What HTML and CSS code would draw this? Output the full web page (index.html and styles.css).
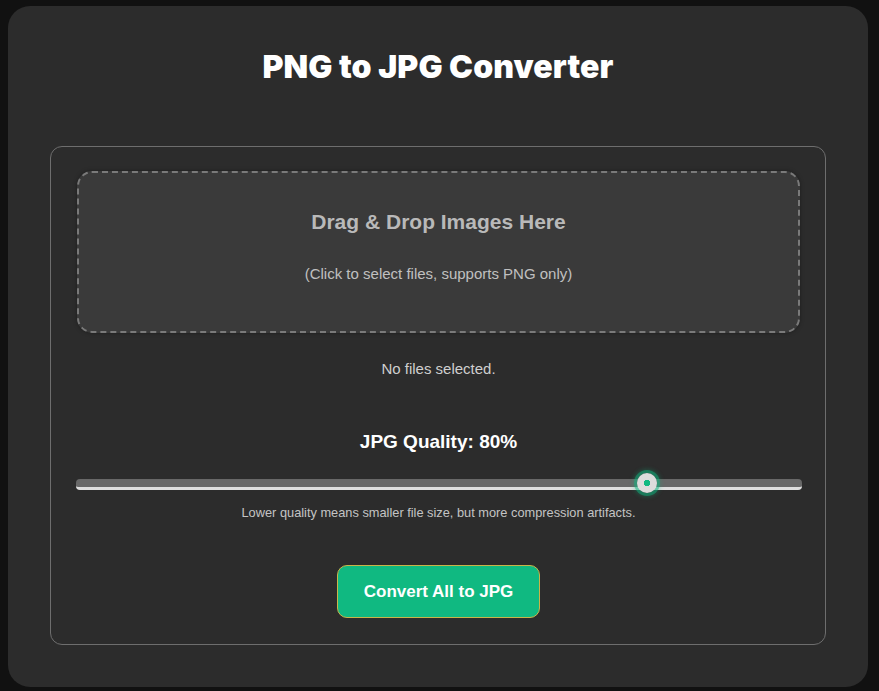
FILE: index.html
```html
<!DOCTYPE html>
<html lang="en">
  <head>
    <meta charset="UTF-8" />
    <meta name="viewport" content="width=device-width, initial-scale=1.0" />
    <title>PNG to JPG Converter</title>
    <link rel="stylesheet" href="styles.css">
  </head>
  <body>
    <div class="converter">
      <h1>PNG to JPG Converter</h1>

      <!-- Upload + settings panel -->
      <section class="panel">
        <label class="drop-zone" for="file-input">
          <p class="drop-title">Drag &amp; Drop Images Here</p>
          <p class="drop-hint">(Click to select files, supports PNG only)</p>
          <input type="file" id="file-input" accept="image/png" multiple />
        </label>

        <p class="file-status">No files selected.</p>

        <div class="quality">
          <label for="quality" class="quality-label">JPG Quality: <span id="quality-value">80</span>%</label>
          <div class="slider">
            <div class="slider-track"></div>
            <div class="slider-thumb" style="left: 78.8%"></div>
          </div>
          <p class="quality-note">Lower quality means smaller file size, but more compression artifacts.</p>
        </div>

        <button class="convert-btn">Convert All to JPG</button>
      </section>
    </div>
  </body>
</html>
```

FILE: styles.css
```css
/* General Styles */
body {
  font-family: "Liberation Sans", Arial, sans-serif;
  margin: 0;
  padding: 6px 0 0;
  background-color: #111111;
  color: #dddddd;
}

/* Main card */
.converter {
  width: 860px;
  height: 681px;
  box-sizing: border-box;
  margin: 0 auto 0 8px;
  padding: 43px 42px 0;
  background-color: #2c2c2c;
  border-radius: 22px;
}

.converter h1 {
  margin: 0 0 61px;
  text-align: center;
  font-family: "Inter", sans-serif;
  font-weight: 900;
  font-size: 32px;
  line-height: 36px;
  color: #ffffff;
  letter-spacing: 0.1px;
}

/* Panel */
.panel {
  border: 1px solid #6e6e6e;
  border-radius: 12px;
  padding: 24px 25px 26px 26px;
  display: flex;
  flex-direction: column;
  align-items: center;
}

.drop-zone {
  box-sizing: border-box;
  width: 100%;
  height: 162px;
  border: 2px dashed #7a7a7a;
  border-radius: 15px;
  background-color: #3a3a3a;
  box-shadow: 0 0 4px rgba(0, 0, 0, 0.35);
  display: flex;
  flex-direction: column;
  align-items: center;
  cursor: pointer;
}

.drop-zone input {
  display: none;
}

.drop-title {
  margin: 37px 0 0;
  font-size: 21px;
  font-weight: bold;
  line-height: 24px;
  color: #b9b9b9;
}

.drop-hint {
  margin: 31px 0 0;
  font-size: 15px;
  line-height: 18px;
  color: #c0c0c0;
}

.file-status {
  margin: 27px 0 0;
  font-size: 15px;
  line-height: 18px;
  color: #cfcfcf;
}

/* Quality slider */
.quality {
  width: 100%;
  margin-top: 53px;
  display: flex;
  flex-direction: column;
  align-items: center;
}

.quality-label {
  font-size: 19px;
  font-weight: bold;
  line-height: 22px;
  color: #ffffff;
}

.slider {
  position: relative;
  width: 100%;
  height: 22px;
  margin-top: 20px;
}

.slider-track {
  position: absolute;
  left: -1px;
  right: -2px;
  top: 6px;
  height: 11px;
  box-sizing: border-box;
  background-color: #686868;
  border-bottom: 3px solid #dedede;
  border-radius: 4px;
}

.slider-thumb {
  position: absolute;
  top: 0;
  width: 20px;
  height: 20px;
  margin-left: -10px;
  border-radius: 50%;
  background: radial-gradient(circle, #10b981 0 3px, #dcdcdc 3.5px);
  box-shadow: 0 0 0 3px rgba(16, 185, 129, 0.45), 0 0 4px 4px rgba(16, 185, 129, 0.25);
}

.quality-note {
  margin: 10px 0 0;
  font-size: 12.8px;
  line-height: 15px;
  color: #c4c4c4;
}

/* Convert button */
.convert-btn {
  margin-top: 45px;
  width: 203px;
  height: 53px;
  background-color: #10b981;
  color: #ffffff;
  font-family: "Liberation Sans", Arial, sans-serif;
  font-size: 17px;
  font-weight: bold;
  border: 1px solid #c9b54a;
  border-radius: 10px;
  cursor: pointer;
  transition: background-color 0.3s ease;
}

.convert-btn:hover {
  background-color: #0ea371;
}
```
